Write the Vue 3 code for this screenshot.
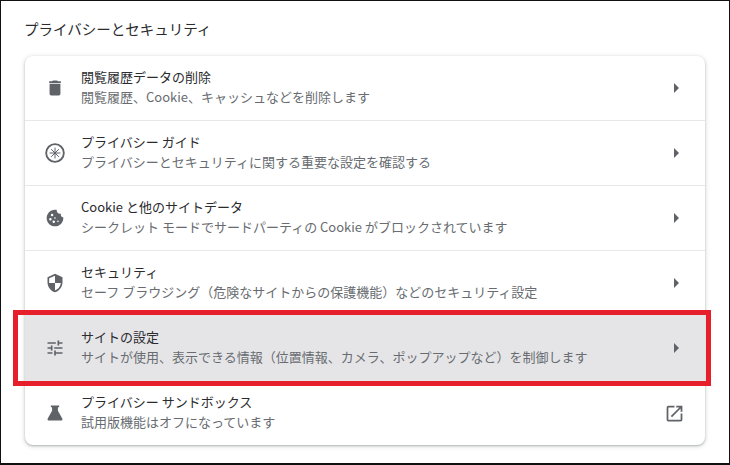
<template>
  <div class="page">
    <h2 class="section-title">プライバシーとセキュリティ</h2>
    <div class="card">
      <div v-for="row in rows" :key="row.title" class="row" :class="{ active: row.active }">
        <svg class="row-icon" viewBox="0 0 24 24" v-html="row.icon"></svg>
        <div class="row-text">
          <div class="row-title">{{ row.title }}</div>
          <div class="row-sub">{{ row.sub }}</div>
        </div>
        <svg v-if="row.external" class="external" viewBox="0 0 24 24">
          <path d="M19 19H5V5h7V3H5a2 2 0 0 0-2 2v14a2 2 0 0 0 2 2h14a2 2 0 0 0 2-2v-7h-2v7zM14 3v2h3.59l-9.83 9.83 1.41 1.41L19 6.41V10h2V3h-7z" />
        </svg>
        <span v-else class="arrow"></span>
      </div>
      <div class="highlight"></div>
    </div>
  </div>
</template>

<script setup>
const rows = [
  {
    title: '閲覧履歴データの削除',
    sub: '閲覧履歴、Cookie、キャッシュなどを削除します',
    icon: '<path d="M5.5 19c0 1.1.9 2 2 2h9c1.1 0 2-.9 2-2V7h-13v12zM19 4h-3.5l-1-1h-5l-1 1H5v2h14V4z"/>'
  },
  {
    title: 'プライバシー ガイド',
    sub: 'プライバシーとセキュリティに関する重要な設定を確認する',
    icon: '<circle cx="12" cy="12" r="10.6" fill="none" stroke="currentColor" stroke-width="2.2"/><path d="M12 5.5v13M5.5 12h13M7.4 7.4l9.2 9.2M16.6 7.4l-9.2 9.2" fill="none" stroke="currentColor" stroke-width="1.2"/>'
  },
  {
    title: 'Cookie と他のサイトデータ',
    sub: 'シークレット モードでサードパーティの Cookie がブロックされています',
    icon: '<path fill-rule="evenodd" d="M21.95 10.99c-1.79-.03-3.7-1.95-2.68-4.22-2.97 1-5.78-1.59-5.19-4.56C7.11.74 2 6.41 2 12c0 5.52 4.48 10 10 10 5.89 0 10.54-5.08 9.95-11.01zM8.5 7a1.5 1.5 0 1 1 0 3 1.5 1.5 0 0 1 0-3zm-2 5a1.5 1.5 0 1 1 0 3 1.5 1.5 0 0 1 0-3zm9 5a1 1 0 1 1 0-2 1 1 0 0 1 0 2zm-5 1a1.5 1.5 0 1 1 0-3 1.5 1.5 0 0 1 0 3zm1.5-5a1 1 0 1 1 0-2 1 1 0 0 1 0 2z"/>'
  },
  {
    title: 'セキュリティ',
    sub: 'セーフ ブラウジング（危険なサイトからの保護機能）などのセキュリティ設定',
    icon: '<path d="M12 1 3 5v6c0 5.55 3.84 10.74 9 12 5.16-1.26 9-6.45 9-12V5l-9-4zm0 10.99h7c-.53 4.12-3.28 7.79-7 8.94V12H5V6.3l7-3.11v8.8z"/>'
  },
  {
    title: 'サイトの設定',
    sub: 'サイトが使用、表示できる情報（位置情報、カメラ、ポップアップなど）を制御します',
    active: true,
    icon: '<path d="M3 17v2h6v-2H3zM3 5v2h10V5H3zm10 16v-2h8v-2h-8v-2h-2v6h2zM7 9v2H3v2h4v2h2V9H7zm14 4v-2H11v2h10zm-6-4h2V7h4V5h-4V3h-2v6z"/>'
  },
  {
    title: 'プライバシー サンドボックス',
    sub: '試用版機能はオフになっています',
    external: true,
    icon: '<path d="M7 3v2h1.5v4.2L3.3 18.5C2.5 20 3.4 21 5 21h14c1.6 0 2.5-1 1.7-2.5L15.5 9.2V5H17V3H7z"/>'
  }
]
</script>

<style>
html, body {
  margin: 0;
  background: #fff;
}
</style>

<style scoped>
.page {
  box-sizing: border-box;
  width: 730px;
  height: 465px;
  padding: 18px 24px 0 24px;
  border-style: solid;
  border-color: #111;
  border-width: 1px 1px 2px 1px;
  font-family: "Noto Sans CJK JP", "Liberation Sans", sans-serif;
  background: #fff;
}

.section-title {
  margin: 0 0 17px -1px;
  font-size: 14.5px;
  line-height: 20px;
  font-weight: 400;
  color: #2a2b2e;
}

.card {
  position: relative;
  width: 680px;
  border-radius: 8px;
  background: #fff;
  box-shadow: 0 1px 2px rgba(60, 64, 67, 0.3), 0 1px 4px 1px rgba(60, 64, 67, 0.15);
}

.row {
  display: flex;
  align-items: center;
  box-sizing: border-box;
  height: 65px;
  padding: 0 20px;
  border-top: 1px solid #e8e8e8;
}

.row:first-child {
  border-top: none;
  height: 64px;
}

.row.active {
  background: #e5e5e8;
  border-top: none;
}

.row-icon {
  width: 20px;
  height: 20px;
  flex: none;
  overflow: visible;
  fill: #5f6368;
  color: #5f6368;
}

.row-text {
  flex: 1;
  margin-left: 16px;
  padding-bottom: 2px;
}

.row-title {
  font-size: 13px;
  line-height: 20px;
  color: #2a2b2e;
}

.row-sub {
  font-size: 13px;
  line-height: 20px;
  color: #686c70;
}

.arrow {
  width: 0;
  height: 0;
  margin-right: 6px;
  border-left: 5px solid #5f6368;
  border-top: 5px solid transparent;
  border-bottom: 5px solid transparent;
}

.external {
  width: 21px;
  height: 21px;
  fill: #5f6368;
}

.highlight {
  position: absolute;
  left: -12px;
  top: 254px;
  width: 698px;
  height: 76px;
  box-sizing: border-box;
  border: 5px solid #e71f2b;
  pointer-events: none;
}
</style>
